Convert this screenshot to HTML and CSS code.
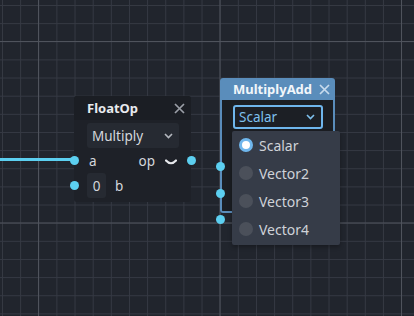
FILE: index.html
```html
<!DOCTYPE html>
<html lang="en">
<head>
  <meta charset="UTF-8" />
  <meta name="viewport" content="width=device-width, initial-scale=1" />
  <title>Graph Editor</title>
  <link rel="stylesheet" href="styles.css">
</head>
<body>
  <div class="canvas">
    <!-- connection into FloatOp.a -->
    <div class="wire"></div>

    <!-- FloatOp node -->
    <div class="node float-op">
      <div class="node-title">
        <span>FloatOp</span>
        <svg class="close" width="11" height="11" viewBox="0 0 11 11"><path d="M1 1L10 10M10 1L1 10" stroke="#9a9ea6" stroke-width="1.7"/></svg>
      </div>
      <div class="node-body">
        <div class="select">
          <span>Multiply</span>
          <svg width="9" height="6" viewBox="0 0 9 6"><path d="M1 1L4.5 4.5L8 1" fill="none" stroke="#b4b8bf" stroke-width="1.6"/></svg>
        </div>
        <div class="row">
          <span class="port port-in"></span>
          <span>a</span>
          <span class="row-right">op
            <svg class="fold" width="12" height="7" viewBox="0 0 12 7"><path d="M1 1.5Q6 7 11 1.5" fill="none" stroke="#e6e8ec" stroke-width="2.2" stroke-linecap="round"/></svg>
          </span>
          <span class="port port-out"></span>
        </div>
        <div class="row">
          <span class="port port-in"></span>
          <span class="num">0</span>
          <span>b</span>
        </div>
      </div>
    </div>

    <!-- MultiplyAdd node (selected) -->
    <div class="node mul-add">
      <div class="node-title">
        <span>MultiplyAdd</span>
        <svg class="close" width="11" height="11" viewBox="0 0 11 11"><path d="M1 1L10 10M10 1L1 10" stroke="#c8dbed" stroke-width="1.7"/></svg>
      </div>
      <div class="node-body">
        <div class="select active">
          <span>Scalar</span>
          <svg width="9" height="6" viewBox="0 0 9 6"><path d="M1 1L4.5 4.5L8 1" fill="none" stroke="#7ec0ee" stroke-width="1.6"/></svg>
        </div>
        <span class="port port-in p1"></span>
        <span class="port port-in p2"></span>
        <span class="port port-in p3"></span>
      </div>
    </div>

    <!-- open dropdown menu -->
    <div class="popup">
      <div class="item"><span class="radio on"></span>Scalar</div>
      <div class="item"><span class="radio"></span>Vector2</div>
      <div class="item"><span class="radio"></span>Vector3</div>
      <div class="item"><span class="radio"></span>Vector4</div>
    </div>
  </div>
</body>
</html>
```

FILE: styles.css
```css
body {
  margin: 0;
  font-family: 'Noto Sans', sans-serif;
  font-size: 14px;
  color: #d4d7dc;
}

.canvas {
  position: relative;
  width: 414px;
  height: 316px;
  overflow: hidden;
  background-color: #21252d;
  background-image:
    linear-gradient(to right, #4f535c 1px, transparent 1px),
    linear-gradient(to bottom, #4f535c 1px, transparent 1px),
    linear-gradient(to right, #353943 1px, transparent 1px),
    linear-gradient(to bottom, #353943 1px, transparent 1px);
  background-size: 181.5px 181.5px, 181.5px 181.5px, 18.15px 18.15px, 18.15px 18.15px;
  background-position: 38px 41px, 38px 41px, 2px 5px, 2px 5px;
}

.wire {
  position: absolute;
  left: 0;
  top: 157.5px;
  width: 74px;
  height: 3px;
  background: #5ccff0;
}

.node {
  position: absolute;
  display: flex;
  flex-direction: column;
  border-radius: 3px;
  font-size: 13.5px;
}

.node-title {
  display: flex;
  align-items: center;
  justify-content: space-between;
  padding: 0 6px 0 13px;
  font-size: 13px;
  font-weight: bold;
  color: #e8eaee;
}

.node-body {
  position: relative;
  flex: 1;
  padding: 3px 12px 0 13px;
}

.float-op {
  left: 74px;
  top: 96px;
  width: 117px;
  height: 106px;
  background: #1e2128;
}

.float-op .node-title {
  height: 24px;
  background: #1b1e24;
  border-radius: 3px 3px 0 0;
}

.select {
  display: flex;
  align-items: center;
  justify-content: space-between;
  height: 25px;
  padding: 0 6px 0 5px;
  background: #262a32;
  border-radius: 3px;
  box-sizing: border-box;
}

.row {
  position: relative;
  display: flex;
  align-items: center;
  gap: 9px;
  height: 25px;
  padding-left: 2px;
}

.row-right {
  margin-left: auto;
  display: flex;
  align-items: center;
  gap: 10px;
  margin-right: 2px;
}

.fold {
  margin-top: 3px;
}

.num {
  width: 19px;
  height: 25px;
  margin-left: -2px;
  display: flex;
  align-items: center;
  justify-content: center;
  background: #262a32;
  border-radius: 3px;
}

.port {
  position: absolute;
  width: 9px;
  height: 9px;
  border-radius: 50%;
  background: #5ccff0;
}

.row .port-in {
  left: -17.5px;
  top: 8px;
}

.row .port-out {
  right: -16.5px;
  top: 8px;
}

.mul-add {
  left: 220px;
  top: 78px;
  width: 115px;
  height: 135px;
  background: #1b1e23;
}

.mul-add .node-title {
  height: 22px;
  background: #5a8dbb;
  border-radius: 3px 3px 0 0;
  color: #f2f6fa;
  padding-right: 5px;
}

.mul-add .node-body {
  border: 2px solid #5a8dbb;
  border-top: none;
  border-radius: 0 0 3px 3px;
  padding: 5px 10px 0 11px;
}

.select.active {
  border: 2px solid #6fb6ec;
  background: #1c1f25;
  color: #7ec0ee;
  padding: 0 6px 0 4px;
  height: 24px;
}

.mul-add .port-in {
  left: -6.5px;
}

.p1 { top: 61.5px; }
.p2 { top: 88.5px; }
.p3 { top: 114.5px; }

.popup {
  position: absolute;
  left: 232px;
  top: 131px;
  width: 108px;
  height: 114px;
  background: #363c48;
  border-radius: 2px;
  box-shadow: 0 2px 4px rgba(0, 0, 0, 0.3);
}

.item {
  display: flex;
  align-items: center;
  gap: 6px;
  height: 28px;
  padding-left: 7px;
  color: #cfd2d8;
}

.radio {
  width: 14px;
  height: 14px;
  border-radius: 50%;
  background: #4b505a;
  box-sizing: border-box;
}

.radio.on {
  background: #ffffff;
  border: 3px solid #6fb6ec;
}
```
